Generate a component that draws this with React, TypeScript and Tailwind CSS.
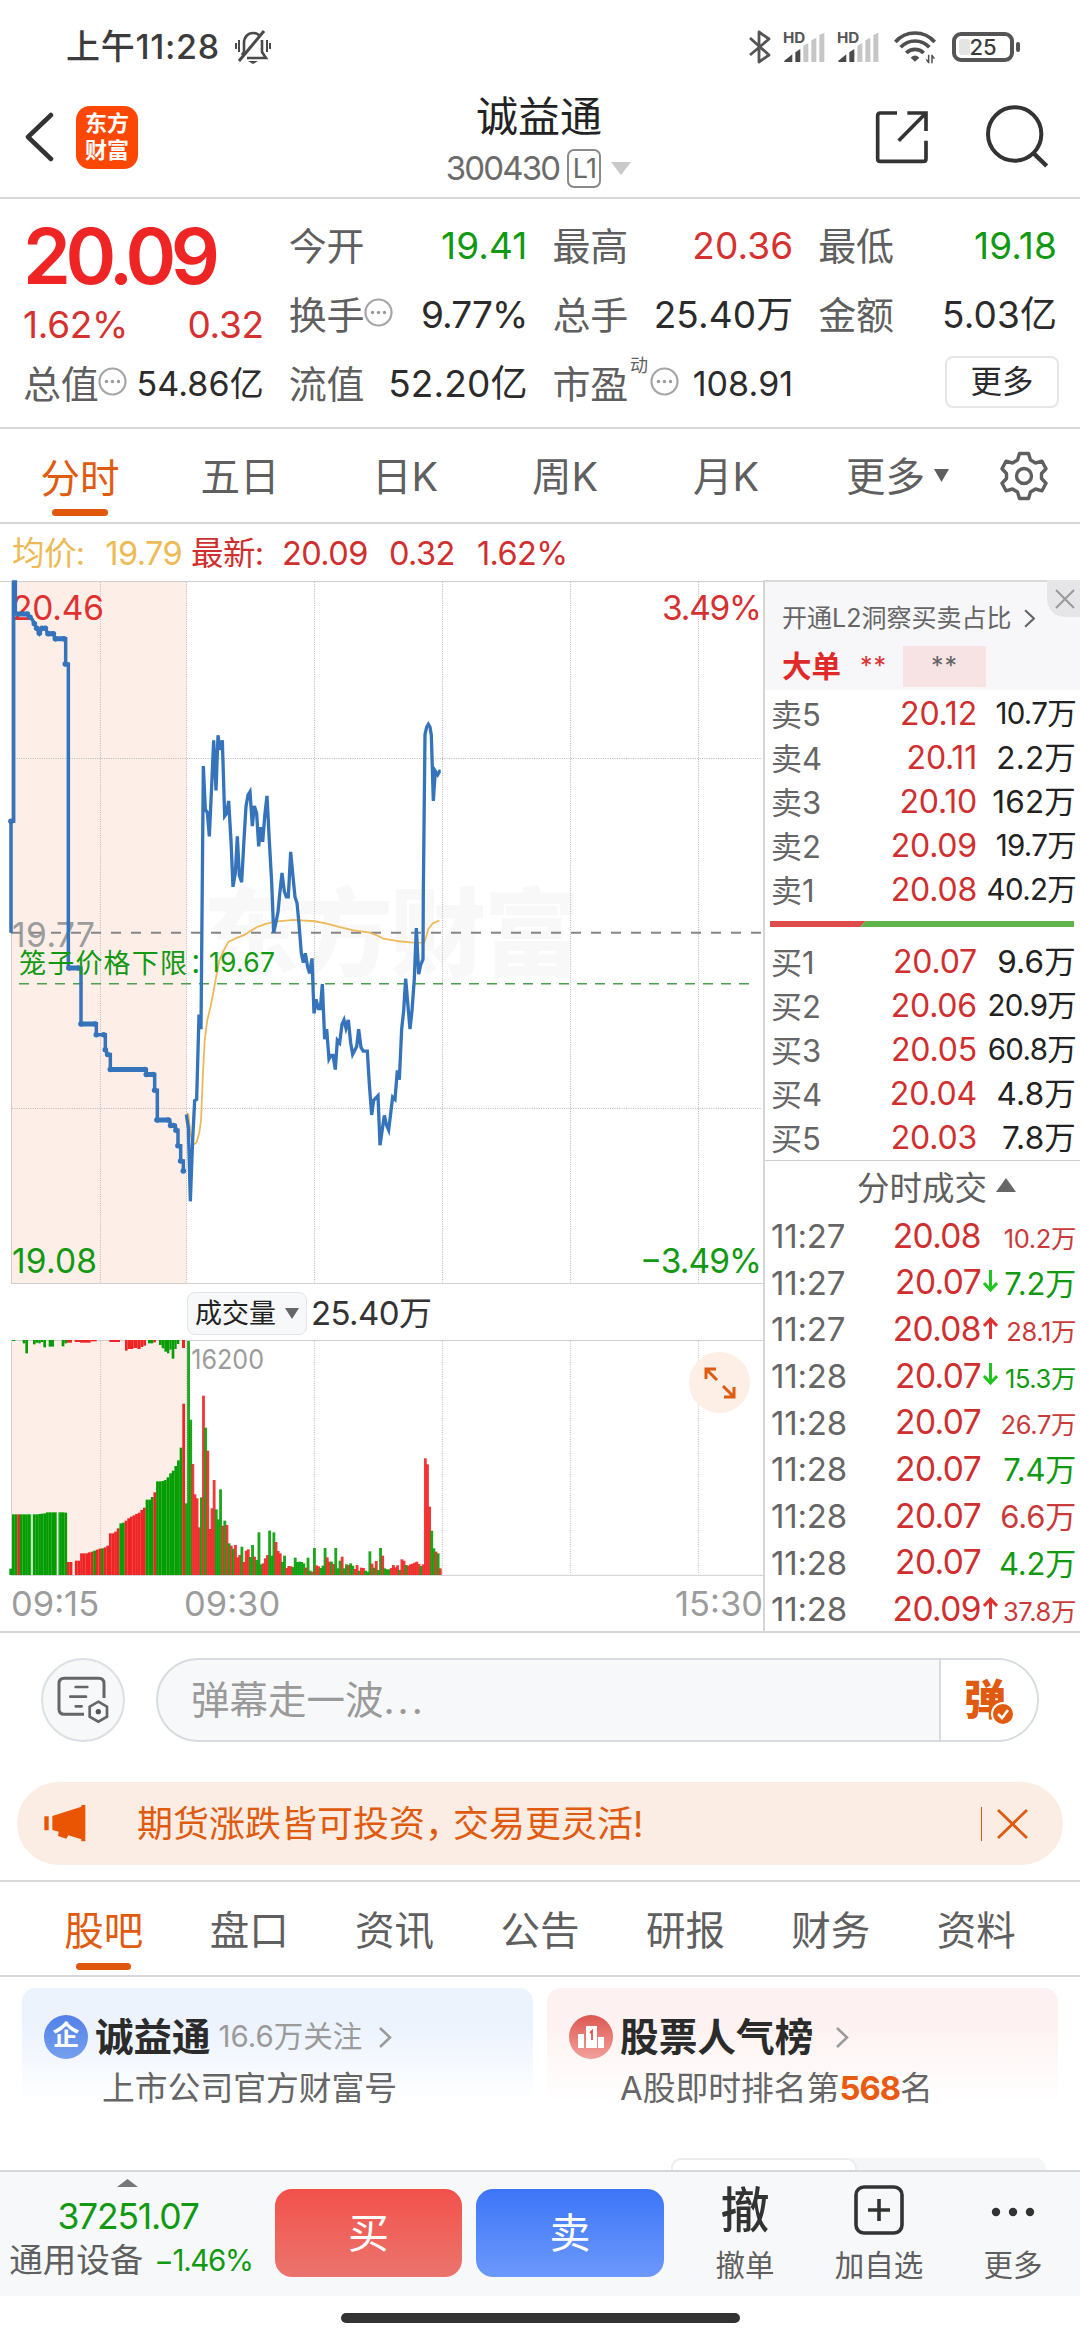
import type { ReactNode } from 'react';
import clsx from 'clsx';

const PRICE_AUCTION =
  '33,790 33,547 41,547 41,26 46,26 46,96 82,96 90,103 97,108 104,118 110,127 118,138 126,127 136,127 144,139 160,139 166,150 197,150 197,205 205,205 205,867 243,867 243,989 289,989 289,1012 316,1012 316,1045 323,1055 331,1055 331,1088 439,1088 439,1099 464,1099 464,1133 472,1133 472,1198 509,1198 512,1210 526,1210 528,1220 534,1220 534,1254 542,1254 542,1287 550,1287 550,1309';

const AUCTION_DOTS = [
  [33, 547], [82, 96], [90, 103], [103, 117], [110, 127], [118, 138], [126, 127], [136, 127], [144, 139], [160, 139],
  [166, 150], [192, 150], [196, 205], [207, 867], [236, 867], [243, 989], [286, 989], [289, 1012], [311, 1012],
  [316, 1045], [323, 1055], [331, 1088], [435, 1088], [439, 1099], [460, 1099], [464, 1133], [471, 1198], [505, 1198],
  [512, 1210], [521, 1210], [528, 1220], [534, 1254], [542, 1287], [550, 1309],
];

const PRICE_LINE =
  '559,1186 565,1215 571,1375 578,1240 584,1156 590,1153 597,968 603,1000 610,427 616,522 622,528 628,580 635,470 641,371 648,480 654,360 660,392 667,371 674,536 680,530 686,503 693,590 699,690 706,660 712,580 718,665 725,680 731,600 738,515 744,490 750,483 757,558 763,514 770,530 776,602 782,560 788,592 795,530 801,492 808,590 815,680 821,790 827,770 834,745 840,700 846,660 853,700 859,712 865,712 872,614 878,660 885,712 891,725 897,770 904,835 910,855 916,835 923,865 929,878 936,846 942,966 948,935 955,955 961,955 967,902 974,1022 980,1000 987,1065 993,1057 999,1057 1006,1088 1012,1024 1019,1030 1026,990 1032,980 1038,998 1045,980 1052,1030 1058,1055 1070,1038 1076,1000 1083,1040 1090,1048 1102,1048 1108,1120 1115,1187 1121,1155 1134,1145 1140,1253 1153,1188 1160,1210 1166,1220 1178,1148 1185,1153 1192,1090 1198,1110 1205,1000 1211,960 1217,890 1224,950 1230,1000 1236,960 1243,890 1249,780 1256,880 1262,860 1269,848 1270,700 1275,358 1280,342 1285,336 1290,342 1294,360 1300,503 1306,438 1313,446 1319,438 1322,438';

const AVG_LINE =
  '559,1183 565,1185 572,1230 580,1252 590,1246 598,1225 603,1200 608,1110 614,1025 622,980 632,950 645,900 658,850 670,830 685,810 705,803 735,794 770,778 800,770 825,766 880,762 945,765 980,770 1020,778 1060,785 1110,790 1135,797 1150,803 1190,808 1230,811 1272,812 1278,800 1285,782 1298,770 1318,763';

// g = down, r = up; number is the y of the top of the bar
const AUCTION_VOLUME =
  'g703 g703 r703 g703 g703 g703 g703 g703 g703 g703 g702 g701 g700 g697 g697 g697 g697 g697 g697 g697 g698 r846 r846 r885 r842 r842 r820 r820 r820 r817 r815 g812 r809 r806 g805 r802 r797 r760 r760 r755 r745 g730 g728 r722 r715 r710 r706 r702 r698 r690 r683 g659 g659 g651 r637 g604 g604 g603 g600 g592 g580 g572 g558 g541 g503 r371';

const UNMATCHED = [
  [36, 10, 183, 'g'], [68, 8, 190, 'g'], [76, 8, 220, 'g'], [99, 8, 193, 'g'], [107, 8, 188, 'g'], [115, 7, 190, 'g'],
  [122, 8, 186, 'g'], [130, 8, 202, 'g'], [146, 16, 200, 'g'], [185, 8, 199, 'g'], [193, 8, 190, 'g'], [201, 15, 188, 'r'],
  [224, 16, 186, 'r'], [240, 32, 188, 'r'], [272, 18, 184, 'r'], [328, 32, 186, 'r'], [375, 8, 212, 'r'],
  [383, 17, 207, 'r'], [400, 12, 204, 'r'], [412, 10, 207, 'r'], [422, 8, 201, 'r'], [430, 8, 197, 'r'],
  [444, 16, 190, 'g'], [460, 8, 187, 'r'], [477, 8, 195, 'g'], [485, 8, 205, 'g'], [493, 8, 215, 'g'], [501, 7, 220, 'g'],
  [508, 7, 209, 'g'], [515, 8, 236, 'g'], [523, 7, 207, 'g'], [530, 8, 192, 'g'], [546, 9, 204, 'r'],
] as const;

const VOLUME =
  'g670 g183 g419 r552 r643 r655 r742 g652 r347 g443 r512 r747 r685 r600 g688 g718 g628 r737 g722 r735 g790 r797 g806 r795 r832 r825 g800 r846 r812 r808 g831 g795 r830 g840 g757 g853 r850 r835 r825 g752 g827 g757 r786 r813 r820 g846 g827 r864 r858 r859 g861 g833 g846 g845 g846 g850 r863 g833 g872 r875 g804 r856 r859 g864 g857 g804 r832 r845 g845 r852 g804 g865 g842 r830 g865 g853 r855 g850 g857 r867 r855 g872 r863 r864 g872 g875 g814 r851 g863 r843 g870 g804 r827 g865 g868 g868 r864 r855 r862 r856 g870 r838 r842 g855 r857 r853 r851 r848 r845 r852 g858 r853 r535 r553 r680 g752 g805 r815 g820 r865';

const ASKS = [
  ['卖5', '20.12', '10.7万'],
  ['卖4', '20.11', '2.2万'],
  ['卖3', '20.10', '162万'],
  ['卖2', '20.09', '19.7万'],
  ['卖1', '20.08', '40.2万'],
];

const BIDS = [
  ['买1', '20.07', '9.6万'],
  ['买2', '20.06', '20.9万'],
  ['买3', '20.05', '60.8万'],
  ['买4', '20.04', '4.8万'],
  ['买5', '20.03', '7.8万'],
];

interface Trade {
  time: string;
  price: string;
  vol: string;
  up: boolean;
  arrow?: 'up' | 'down';
}

const TRADES: Trade[] = [
  { time: '11:27', price: '20.08', vol: '10.2万', up: true },
  { time: '11:27', price: '20.07', vol: '7.2万', up: false, arrow: 'down' },
  { time: '11:27', price: '20.08', vol: '28.1万', up: true, arrow: 'up' },
  { time: '11:28', price: '20.07', vol: '15.3万', up: false, arrow: 'down' },
  { time: '11:28', price: '20.07', vol: '26.7万', up: true },
  { time: '11:28', price: '20.07', vol: '7.4万', up: false },
  { time: '11:28', price: '20.07', vol: '6.6万', up: true },
  { time: '11:28', price: '20.07', vol: '4.2万', up: false },
  { time: '11:28', price: '20.09', vol: '37.8万', up: true, arrow: 'up' },
];

const fillOf = (c: string) => (c === 'g' ? '#049d04' : '#ef2424');

function Signal() {
  return (
    <svg className="w-[42px] h-[42px] mt-[-10px]" viewBox="0 -30 126 126">
      <text x="0" y="35" fontSize="43" fontWeight="700" fill="#555" textLength="67" lengthAdjust="spacingAndGlyphs">HD</text>
      <path d="M4 93V89L28 70V93Z" fill="#4a4a4a" />
      <path d="M37 93V64L52 54V93Z" fill="#4a4a4a" />
      <path d="M61 93V44L76 36V93ZM85 93V28L100 20V93ZM109 93V12L124 5V93Z" fill="#c6c6c6" />
    </svg>
  );
}

function StatusBar() {
  return (
    <div className="h-[94px] flex items-center pl-[66px] pr-[60px] text-[#3c3c3c]">
      <span className="text-[34px] font-medium tracking-[0.700px] leading-none">上午11:28</span>
      <svg className="ml-[15px] w-[36px] h-[34px]" viewBox="0 0 36 34" fill="none" stroke="#4a4a4a" strokeWidth="2.6">
        <path d="M9 22V13C9 7 13 3 18 3c3 0 5.500 1.200 7 3.400M27 10v12l4 6H12M9 22l-2 3" />
        <path d="M29 1L4 31" strokeWidth="3" />
        <path d="M4 10v12M1 13v6M32 10v12M35 13v6" strokeWidth="2" />
        <path d="M13 31h10l-5 3z" fill="#4a4a4a" stroke="none" />
      </svg>
      <div className="ml-auto flex items-center">
        <svg className="w-[22px] h-[34px]" viewBox="0 0 22 34" fill="none" stroke="#555" strokeWidth="2.8">
          <path d="M1 8L20 25L10 32V2L20 9L1 25" strokeLinejoin="round" />
        </svg>
        <div className="ml-[12px]"><Signal /></div>
        <div className="ml-[12px]"><Signal /></div>
        <svg className="ml-[15px] w-[44px] h-[34px]" viewBox="0 0 132 102" fill="none" stroke="#4f4f4f" strokeWidth="11">
          <path d="M4 36A78 78 0 0 1 122 36" />
          <path d="M20 52A58 58 0 0 1 106 52" />
          <path d="M37 69A37 37 0 0 1 89 69" />
          <path d="M50 83Q63 70 76 83L63 95Z" fill="#4f4f4f" stroke="none" />
          <path d="M104 74v26M114 100V74M97 88l7 10M121 86l-7-10" strokeWidth="4.500" />
        </svg>
        <div className="ml-[14px] w-[62px] h-[30px] rounded-[9px] border-4 border-[#555] flex items-center justify-center relative">
          <div className="absolute left-[3px] top-[3px] w-[11px] h-[16px] rounded-[3px] bg-[#e4e4e4]" />
          <span className="relative text-[22px] leading-none font-medium text-[#3c3c3c]">25</span>
        </div>
        <div className="ml-[2px] w-[4px] h-[10px] rounded-full bg-[#555]" />
      </div>
    </div>
  );
}

function Header() {
  return (
    <div className="h-[105px] flex border-b-2 border-[#d9d9d9]">
      <div className="flex-1 flex pl-[24px] pt-[12px]">
        <svg className="mt-[6px] w-[30px] h-[50px]" viewBox="0 0 30 50" fill="none" stroke="#333" strokeWidth="4.500" strokeLinecap="round" strokeLinejoin="round">
          <path d="M27 3L4 25L27 47" />
        </svg>
        <div className="ml-[22px] w-[62px] h-[63px] rounded-[14px] bg-[#fd4705] text-white text-[22px] font-bold leading-[27px] text-center pt-[4px]">
          <div>东方</div>
          <div>财富</div>
        </div>
      </div>
      <div className="w-[240px] flex flex-col items-center">
        <div className="pl-[5px] text-[42px] leading-[46px] text-[#222]">诚益通</div>
        <div className="mt-[8px] flex items-center h-[40px] pl-[4px]">
          <span className="text-[33px] leading-none tracking-[-1.8px] text-[#6b6b6b]">300430</span>
          <span className="ml-[8px] w-[34px] h-[39px] rounded-[7px] border-2 border-[#8a8a8a] text-[27px] leading-[35px] tracking-[-1px] text-center text-[#6b6b6b]">L1</span>
          <svg className="ml-[10px] w-[20px] h-[13px]" viewBox="0 0 20 13"><path d="M0 0h20L10 13z" fill="#c9c9c9" /></svg>
        </div>
      </div>
      <div className="flex-1 flex justify-end pr-[31px] pt-[10px]">
        <svg className="mt-[6px] w-[54px] h-[54px]" viewBox="434 268 162 162" fill="none" stroke="#333" strokeWidth="11">
          <path d="M500 277H450Q442 277 442 285V414Q442 422 450 422H579Q587 422 587 414V360M531 277H587V331M584 280L505 360" />
        </svg>
        <svg className="ml-[56px] w-[64px] h-[64px]" viewBox="765 251 192 192" fill="none" stroke="#333" strokeWidth="12">
          <circle cx="854" cy="341" r="80" />
          <path d="M908 396L950 437" strokeWidth="13" />
        </svg>
      </div>
    </div>
  );
}

function InfoDot() {
  return (
    <svg className="w-[29px] h-[29px] mb-[4px] shrink-0" viewBox="0 0 29 29" fill="#9a9a9a">
      <circle cx="14.500" cy="14.500" r="13" fill="none" stroke="#a6a6a6" strokeWidth="2.200" />
      <circle cx="8.500" cy="14.500" r="1.700" />
      <circle cx="14.500" cy="14.500" r="1.700" />
      <circle cx="20.500" cy="14.500" r="1.700" />
    </svg>
  );
}

function Quote({ label, value, tone, info, small }: { label: ReactNode; value: string; tone: string; info?: boolean; small?: boolean }) {
  return (
    <div className="h-[69px] flex items-center whitespace-nowrap">
      <span className="text-[38px] leading-none tracking-[-0.300px] text-[#5f5f5f]">{label}</span>
      {info && <InfoDot />}
      <span className={clsx('ml-auto leading-none', small ? 'text-[34px]' : 'text-[37px]', value.endsWith('%') ? 'tracking-[-0.900px]' : 'tracking-[0.100px]', tone)}>{value}</span>
    </div>
  );
}

function QuotePanel() {
  return (
    <div className="h-[230px] pt-[12px] px-[23px] flex gap-[25px] border-b-2 border-[#d9d9d9]">
      <div className="w-[241px]">
        <div className="h-[90px] flex items-center text-[77px] font-semibold leading-none tracking-[-5.500px] text-[#ef2424]">20.09</div>
        <div className="h-[50px] pb-1 flex items-center justify-between text-[37px] leading-none tracking-[-0.300px] text-[#d63131]">
          <span>1.62%</span>
          <span>0.32</span>
        </div>
        <div className="mt-[-2px]">
          <Quote label="总值" value="54.86亿" tone="text-[#2b2b2b]" info small />
        </div>
      </div>
      <div className="w-[239px]">
        <Quote label="今开" value="19.41" tone="text-[#119911]" />
        <Quote label="换手" value="9.77%" tone="text-[#2b2b2b]" info />
        <Quote label="流值" value="52.20亿" tone="text-[#2b2b2b]" />
      </div>
      <div className="w-[241px]">
        <Quote label="最高" value="20.36" tone="text-[#d63131]" />
        <Quote label="总手" value="25.40万" tone="text-[#2b2b2b]" />
        <Quote label={<>市盈<sup className="ml-[2px] mr-[2px] text-[18px] top-[-1.4em]">动</sup></>} value="108.91" tone="text-[#2b2b2b]" info small />
      </div>
      <div className="w-[239px]">
        <Quote label="最低" value="19.18" tone="text-[#119911]" />
        <Quote label="金额" value="5.03亿" tone="text-[#2b2b2b]" />
        <div className="h-[66px] flex items-center justify-end">
          <div className="w-[114px] h-[52px] mr-[-2px] rounded-[8px] border-2 border-[#e6e6e6] text-[31.500px] leading-[48px] text-center text-[#2b2b2b]">更多</div>
        </div>
      </div>
    </div>
  );
}

function PeriodTabs() {
  return (
    <div className="h-[95px] flex items-center pl-[26px] pr-[32px] text-[39.500px] leading-none text-[#5f5f5f] border-b-2 border-[#d9d9d9]">
      <div className="w-[108px] h-full flex flex-col items-center justify-between pt-[31px] pb-[6px] text-[#df5b10]">
        <span>分时</span>
        <span className="w-[56px] h-[7px] rounded-full bg-[#e0560b]" />
      </div>
      <span className="w-[212px] pt-[4px] text-center">五日</span>
      <span className="w-[118px] pt-[4px] text-center">日K</span>
      <span className="w-[202px] pt-[4px] text-center">周K</span>
      <span className="w-[120px] pt-[4px] text-center">月K</span>
      <span className="ml-[60px] pt-[4px]">更多</span>
      <svg className="ml-[9px] w-[15px] h-[13px]" viewBox="0 0 15 13"><path d="M0 0h15L7.500 13z" fill="#5f5f5f" /></svg>
      <svg className="ml-auto w-[48px] h-[50px]" viewBox="0 0 48 50" fill="none" stroke="#5f5f5f" strokeWidth="3.400" strokeLinejoin="round">
        <path d="M19.500 2.500h9l2 6.500 5 3 6.500-1.800 4 7.600-4.500 4.700v5l4.500 4.700-4 7.600-6.500-1.800-5 3-2 6.500h-9l-2-6.500-5-3-6.500 1.800-4-7.600 4.500-4.700v-5L2 17.800l4-7.600L12.500 12l5-3z" />
        <circle cx="24" cy="25" r="7.500" />
      </svg>
    </div>
  );
}

function PriceChart() {
  return (
    <svg className="block w-[763px] h-[711px]" viewBox="0 578 763 711">
      <rect x="11.500" y="581" width="175" height="703" fill="#fdeee8" />
      <text x="203" y="968" fontSize="96" fontWeight="900" fill="#f8f8f8" textLength="377">东方财富</text>
      <g stroke="#b8b8b8" strokeWidth="1" strokeDasharray="1 1.300">
        <path d="M100.500 582V1283M186.500 582V1283M314.500 582V1283M442.500 582V1283M570.500 582V1283M698.500 582V1283" />
        <path d="M12 758.500H762M12 1108.500H762" />
      </g>
      <path d="M0 581.500H763M11.500 581V1284M11 1283.500H763" stroke="#cfcfcf" fill="none" />
      <g fontSize="33.500">
        <text x="12" y="619.500" fill="#e03131" textLength="92">20.46</text>
        <text x="12" y="946.500" fill="#9c9c9c" textLength="83">19.77</text>
        <text x="12" y="1272.500" fill="#119911" textLength="85">19.08</text>
        <text x="662" y="619.500" fill="#d63131" textLength="100">3.49%</text>
        <text x="640" y="1272.500" fill="#119911" textLength="122">−3.49%</text>
      </g>
      <path d="M11 932.700H762" stroke="#858585" strokeWidth="2" strokeDasharray="10 10" />
      <path d="M19 983.700H750" stroke="#4ba04b" strokeWidth="1.600" strokeDasharray="10 8" />
      <g transform="translate(0 570) scale(0.33333 0.45914)" fill="none">
        <polyline points={AVG_LINE} stroke="#efb95a" strokeWidth="1.800" strokeLinejoin="round" vectorEffect="non-scaling-stroke" />
        <polyline points={PRICE_AUCTION} stroke="#3573bb" strokeWidth="3.500" vectorEffect="non-scaling-stroke" />
        {AUCTION_DOTS.map(([x, y], i) => (
          <ellipse key={i} cx={x} cy={y} rx="8.500" ry="6" fill="#3573bb" />
        ))}
        <path
          d="M50 96H82M144 139H160M166 150H192M207 867H236M243 989H286M331 1088H435M439 1099H460M471 1198H505"
          stroke="#3573bb"
          strokeWidth="5"
          vectorEffect="non-scaling-stroke"
        />
        <polyline points={PRICE_LINE} stroke="#3573bb" strokeWidth="3.300" vectorEffect="non-scaling-stroke" />
      </g>
      <text x="19" y="972.500" fontSize="27" fill="#119911" textLength="168">笼子价格下限</text>
      <text x="189" y="972.500" fontSize="27" fill="#119911">：</text>
      <text x="209" y="971.500" fontSize="26.500" fill="#119911" textLength="66">19.67</text>
    </svg>
  );
}

function VolumeChart() {
  return (
    <svg className="block w-[763px] h-[237px]" viewBox="0 180 2289 711">
      <rect x="34" y="180" width="526" height="706" fill="#fdeee8" />
      <g stroke="#b8b8b8" strokeWidth="3" strokeDasharray="3 4">
        <path d="M302 183V884M560 183V884M943 183V884M1327 183V884M1711 183V884M2095 183V884" />
      </g>
      <path d="M34 181.500H2289M34.500 181V886M34 886H2289" stroke="#cfcfcf" strokeWidth="3" fill="none" />
      {UNMATCHED.map(([x, w, bottom, c]) => (
        <rect key={x} x={x} y="180" width={w} height={bottom - 180} fill={fillOf(c)} />
      ))}
      <rect x="28" y="866" width="8" height="19" fill="#049d04" />
      {AUCTION_VOLUME.split(' ').map((bar, i) => (
        <rect key={i} x={36 + i * 7.86} y={Number(bar.slice(1))} width="8.200" height={885 - Number(bar.slice(1))} fill={fillOf(bar[0])} />
      ))}
      <path d="M96 702V885M173 696V885" stroke="#e4f5dc" strokeWidth="5" />
      {VOLUME.split(' ').map((bar, i) => (
        <rect key={i} x={555 + i * 6.4} y={Number(bar.slice(1))} width="8.500" height={885 - Number(bar.slice(1))} fill={fillOf(bar[0])} fillOpacity="0.9" />
      ))}
      <text x="574" y="268" fontSize="79" fill="#9c9c9c" textLength="218" lengthAdjust="spacingAndGlyphs">16200</text>
    </svg>
  );
}

function ChartColumn() {
  return (
    <div className="w-[763px]">
      <PriceChart />
      <div className="h-[51px] flex items-center pl-[187px] pb-[2px]">
        <div className="w-[120px] h-[43px] rounded-[8px] border border-[#e2e4e8] bg-[#f7f8fa] flex items-center justify-center gap-[9px] text-[27px] leading-none text-[#222]">
          成交量
          <svg className="w-[14px] h-[11px]" viewBox="0 0 14 11"><path d="M0 0h14L7 11z" fill="#666" /></svg>
        </div>
        <span className="ml-[4px] text-[33px] leading-none tracking-[-0.600px] text-[#333]">25.40万</span>
      </div>
      <div className="relative">
        <VolumeChart />
        <div className="absolute left-[689px] top-[12px] w-[61px] h-[61px] rounded-full bg-[#fdeee6] flex items-center justify-center">
          <svg className="w-[32px] h-[32px]" viewBox="0 0 32 32" fill="none" stroke="#df5b10" strokeWidth="3">
            <path d="M2 12V2H12M2 2L13 13M30 20V30H20M30 30L19 19" />
          </svg>
        </div>
      </div>
      <div className="h-[54px] flex items-center pl-[11px] pt-[1px] text-[34.500px] leading-none text-[#9c9c9c]">
        <span className="w-[173px]">09:15</span>
        <span>09:30</span>
        <span className="ml-auto">15:30</span>
      </div>
    </div>
  );
}

function BookRow({ row }: { row: string[] }) {
  const wide = row[2].length > 4;
  return (
    <div className="h-[44px] flex items-center leading-none">
      <span className="w-[70px] text-[31px] text-[#666]">{row[0]}</span>
      <span className="w-[136px] text-right text-[32px] tracking-[-0.200px] text-[#d02f2f]">{row[1]}</span>
      <span className={clsx('flex-1 text-right text-[#222] whitespace-nowrap', wide ? 'text-[29.500px] tracking-[-0.700px]' : 'text-[31.500px] tracking-[0.200px]')}>{row[2]}</span>
    </div>
  );
}

function Arrow({ dir }: { dir: 'up' | 'down' }) {
  return (
    <svg className="w-[15px] h-[22px]" viewBox="0 0 15 22" fill="none" stroke={dir === 'up' ? '#e03131' : '#1fc41f'} strokeWidth="3">
      <path d={dir === 'up' ? 'M7.500 22V3M1 9l6.500-7L14 9' : 'M7.500 0v19M1 13l6.500 7L14 13'} />
    </svg>
  );
}

function OrderBook() {
  return (
    <div className="relative flex-1 mt-[2px] border-l-2 border-[#d5d5d5] flex flex-col">
      <div className="h-[112px] bg-[#f7f7fa] border-t-2 border-[#d9d9d9]">
        <div className="pt-[22px] pl-[17px] flex items-center gap-[13px]">
          <span className="text-[25px] leading-[28px] whitespace-nowrap text-[#666]">开通L2洞察买卖占比</span>
          <svg className="w-[11px] h-[19px]" viewBox="0 0 10 17" fill="none" stroke="#666" strokeWidth="2"><path d="M1 1l8 7.500L1 16" /></svg>
        </div>
        <div className="mt-[14px] pl-[17px] flex items-center h-[41px]">
          <span className="text-[29.500px] font-bold leading-none text-[#e02a2a]">大单</span>
          <span className="ml-[19px] w-[43px] text-[25px] leading-none text-[#e03131] tracking-[1px]">**</span>
          <span className="w-[83px] h-[41px] bg-[#f7e3e4] text-center text-[25px] leading-[40px] text-[#666] tracking-[1px]">**</span>
        </div>
      </div>
      <div className="absolute right-0 top-0 w-[36px] h-[37px] rounded-bl-[18px] bg-[#e6e6e8] flex items-center justify-center">
        <svg className="w-[20px] h-[20px]" viewBox="0 0 20 20" fill="none" stroke="#999" strokeWidth="2"><path d="M1 1l18 18M19 1L1 19" /></svg>
      </div>
      <div className="pl-[6px] pr-[7px] pt-[2px]">
        {ASKS.map((row) => <BookRow key={row[0]} row={row} />)}
        <svg className="block ml-[-1px] mt-[9px] mb-[13px] w-[304px] h-[6px]" viewBox="0 0 304 6">
          <path d="M0 0H96L90 6H0Z" fill="#dd4b4b" />
          <path d="M96 0H304V6H90Z" fill="#5fb44a" />
        </svg>
        {BIDS.map((row) => <BookRow key={row[0]} row={row} />)}
      </div>
      <div className="mt-auto border-t border-[#d0d0d0] h-[471px]">
        <div className="h-[52px] pt-[4px] flex items-center justify-center gap-[9px] pl-[25px] text-[32.500px] leading-none text-[#5f5f5f]">
          分时成交
          <svg className="w-[20px] h-[14px] mb-2" viewBox="0 0 20 14"><path d="M0 14h20L10 0z" fill="#666" /></svg>
        </div>
        {TRADES.map((t, i) => (
          <div key={i} className="h-[46.700px] pl-[6px] pr-[7px] flex items-center leading-none whitespace-nowrap">
            <span className="w-[88px] text-[33px] tracking-[-0.200px] text-[#666]">{t.time}</span>
            <span className="w-[122px] text-right text-[33.500px] tracking-[-0.600px] text-[#d02f2f]">{t.price}</span>
            <span className="w-[18px] pl-[2px] pb-1">{t.arrow && <Arrow dir={t.arrow} />}</span>
            <span
              className={clsx(
                'flex-1 text-right',
                t.vol.length > 4 ? 'text-[25.500px] tracking-[-0.400px] pt-[4px]' : 'text-[31px] tracking-[-0.200px]',
                t.up ? 'text-[#c93a3a]' : 'text-[#119911]',
              )}
            >
              {t.vol}
            </span>
          </div>
        ))}
      </div>
    </div>
  );
}

function DanmuBar() {
  return (
    <div className="pt-[25px] pl-[41px] pr-[41px] flex justify-between">
      <div className="w-[84px] h-[84px] rounded-full border-2 border-[#dcdfe4] bg-[#f6f8fa] flex items-center justify-center">
        <svg className="w-[52px] h-[48px]" viewBox="84 113 156 144" fill="none" stroke="#666" strokeWidth="9">
          <path d="M165 228H106Q90 228 90 212V136Q90 120 106 120H209Q225 120 225 136V179" />
          <path d="M140 146H175M124 175H171M140 204H158" strokeLinecap="round" strokeWidth="8" />
          <path d="M208 190L234 205V235L208 250L182 235V205Z" strokeWidth="8" />
          <circle cx="208" cy="220" r="8" fill="#555" stroke="none" />
        </svg>
      </div>
      <div className="w-[883px] h-[84px] rounded-full border-2 border-[#d8dbdf] bg-[#f6f8fa] flex overflow-hidden">
        <span className="flex-1 pl-[33px] text-[38.500px] leading-[80px] text-[#9a9a9a]">弹幕走一波<span className="tracking-[3px]">...</span></span>
        <div className="w-[98px] border-l-2 border-[#d8dbdf] bg-white flex items-center pl-[23px]">
          <div className="relative text-[42px] leading-[44px] font-black text-[#df5b10]">
            弹
            <svg className="absolute left-[27px] top-[24px] w-[24px] h-[24px]" viewBox="0 0 24 24">
              <circle cx="12" cy="12" r="11" fill="#df5b10" stroke="#fff" strokeWidth="2" />
              <path d="M7 12l4 4 6-8" fill="none" stroke="#fff" strokeWidth="2.500" />
            </svg>
          </div>
        </div>
      </div>
    </div>
  );
}

function Banner() {
  return (
    <div className="mt-[40px] mx-[17px] h-[83px] rounded-full bg-[#fcede4] flex items-center pl-[27px] text-[#df5b10]">
      <svg className="w-[42px] h-[37px]" viewBox="44 497 126 111" fill="#ea5504">
        <path d="M45 531h13v42H45zM69 530L156 502V497H168V606H156V600L117 588L111 598L86 590L88 577L69 572Z" />
      </svg>
      <span className="ml-[51px] text-[36px] leading-none">期货涨跌皆可投资<span className="inline-block w-[28px]">，</span>交易更灵活!</span>
      <div className="ml-auto w-[1px] h-[34px] bg-[#df5b10]" />
      <svg className="ml-[15px] mr-[35px] w-[31px] h-[30px]" viewBox="0 0 31 30" fill="none" stroke="#df5b10" strokeWidth="2.800"><path d="M1 1l29 28M30 1L1 29" /></svg>
    </div>
  );
}

function SectionTabs() {
  return (
    <div className="mt-[15px] h-[97px] border-y-2 border-[#d9d9d9] flex px-[31px] text-[39.500px] leading-none text-[#5f5f5f]">
      {['股吧', '盘口', '资讯', '公告', '研报', '财务', '资料'].map((tab, i) => (
        <div key={tab} className={clsx('flex-1 flex flex-col items-center pt-[30px]', i === 0 && 'text-[#df5b10]')}>
          {tab}
          {i === 0 && <span className="mt-[11px] w-[55px] h-[7px] rounded-full bg-[#e0560b]" />}
        </div>
      ))}
    </div>
  );
}

function Cards() {
  return (
    <div className="mt-[11px] px-[22px] flex gap-[14px] whitespace-nowrap">
      <div className="flex-1 h-[127px] rounded-t-[14px] bg-gradient-to-b from-[#ecf3fd] from-30% to-white to-90% pl-[22px] pt-[24px]">
        <div className="flex items-center h-[50px]">
          <div className="w-[44px] h-[44px] rounded-full bg-gradient-to-b from-[#5280e8] to-[#76a0ee] text-white text-[27px] font-bold leading-[42px] text-center">企</div>
          <span className="ml-[7px] text-[38.500px] leading-none font-bold text-[#2b2b2b]">诚益通</span>
          <span className="ml-[8px] text-[29.500px] leading-none text-[#9a9a9a]">16.6万关注</span>
          <svg className="ml-[17px] w-[13px] h-[21px]" viewBox="0 0 13 21" fill="none" stroke="#9a9a9a" strokeWidth="2.500"><path d="M1 1l10 9.500L1 20" /></svg>
        </div>
        <div className="mt-[9px] pl-[58px] text-[32.800px] leading-[34px] text-[#666]">上市公司官方财富号</div>
      </div>
      <div className="flex-1 h-[127px] rounded-t-[14px] bg-gradient-to-b from-[#fdf2f1] from-30% to-white to-90% pl-[22px] pt-[24px]">
        <div className="flex items-center h-[50px]">
          <div className="w-[44px] h-[44px] rounded-full bg-gradient-to-b from-[#dc5650] to-[#f2a19c] flex items-center justify-center">
            <svg className="w-[26px] h-[22px]" viewBox="0 0 26 22" fill="#fff">
              <path d="M0 8h6v14H0zM8 0h11v22H8zM20 11h6v11h-6z" />
              <path d="M12 7l2-2v9" stroke="#dc5650" strokeWidth="1.800" fill="none" />
            </svg>
          </div>
          <span className="ml-[7px] text-[38.700px] leading-none font-bold text-[#2b2b2b]">股票人气榜</span>
          <svg className="ml-[23px] w-[13px] h-[21px]" viewBox="0 0 13 21" fill="none" stroke="#9a9a9a" strokeWidth="2.500"><path d="M1 1l10 9.500L1 20" /></svg>
        </div>
        <div className="mt-[9px] pl-[51px] text-[32.800px] leading-[34px] text-[#666]">
          A股即时排名第<span className="font-bold text-[#ea5a10] tracking-[-1px]">568</span>名
        </div>
      </div>
    </div>
  );
}

function BottomBar() {
  return (
    <div className="h-[126px] bg-[#f6f8fa] border-t-2 border-[#d5d8da] flex leading-none whitespace-nowrap">
      <div className="w-[254px] pl-[8px] flex flex-col items-center pt-[7px]">
        <svg className="w-[21px] h-[8px] mr-[8px]" viewBox="0 0 21 8"><path d="M0 8h21L10.500 0z" fill="#777" /></svg>
        <span className="mt-[12px] mr-[6px] text-[35.500px] tracking-[-1.200px] text-[#119911]">37251.07</span>
        <div className="mt-[9px] flex items-center gap-[11px]">
          <span className="text-[33.500px] text-[#5f5f5f]">通用设备</span>
          <span className="text-[29.500px] tracking-[-1.300px] text-[#119911]">−1.46%</span>
        </div>
      </div>
      <div className="ml-[21px] mt-[17px] w-[187px] h-[88px] rounded-[17px] bg-gradient-to-b from-[#f2504a] to-[#ea746d] text-white text-[41px] flex items-center justify-center">买</div>
      <div className="ml-[14px] mt-[17px] w-[188px] h-[88px] rounded-[17px] bg-gradient-to-b from-[#3c75f7] to-[#6c98fb] text-white text-[41px] flex items-center justify-center">卖</div>
      <div className="ml-[14px] w-[134px] flex flex-col items-center text-[29.500px] text-[#5f5f5f]">
        <span className="mt-[14px] h-[50px] text-[49px] font-medium leading-[50px] text-[#333]">撤</span>
        <span className="mt-[15px]">撤单</span>
      </div>
      <div className="w-[134px] flex flex-col items-center text-[29.500px] text-[#5f5f5f]">
        <svg className="mt-[13px] w-[50px] h-[50px]" viewBox="0 0 50 50" fill="none" stroke="#333" strokeWidth="3.600">
          <rect x="2" y="2" width="46" height="46" rx="8" />
          <path d="M25 14v22M14 25h22" />
        </svg>
        <span className="mt-[16px]">加自选</span>
      </div>
      <div className="flex-1 flex flex-col items-center text-[29.500px] text-[#5f5f5f]">
        <svg className="mt-[13px] w-[44px] h-[50px]" viewBox="0 0 44 50" fill="#333">
          <circle cx="5" cy="27" r="4.200" />
          <circle cx="22" cy="27" r="4.200" />
          <circle cx="39" cy="27" r="4.200" />
        </svg>
        <span className="mt-[16px]">更多</span>
      </div>
    </div>
  );
}

export default function App() {
  return (
    <div className="w-[1080px] h-[2340px] overflow-hidden bg-white flex flex-col font-['Inter','Noto_Sans_CJK_SC',sans-serif]">
      <StatusBar />
      <Header />
      <QuotePanel />
      <PeriodTabs />
      <div className="h-[54px] flex items-center pl-[12px] pt-[7px] text-[32.500px] leading-none tracking-[-0.600px] text-[#d02f2f] whitespace-nowrap">
        <span className="w-[179px] flex justify-between pr-[9px] text-[#edba55]"><span>均价:</span><span>19.79</span></span>
        <span className="w-[91px]">最新:</span>
        <span className="w-[107px]">20.09</span>
        <span className="w-[88px]">0.32</span>
        <span>1.62%</span>
      </div>
      <div className="h-[1055px] flex border-b-2 border-[#d5d5d5]">
        <ChartColumn />
        <OrderBook />
      </div>
      <DanmuBar />
      <Banner />
      <SectionTabs />
      <Cards />
      <div className="mt-auto ml-[671px] w-[375px] h-[12px] rounded-t-[10px] bg-[#f5f6f8]">
        <div className="w-[186px] h-[12px] rounded-t-[10px] border-2 border-b-0 border-[#ebecee] bg-white" />
      </div>
      <BottomBar />
      <div className="h-[44px] shrink-0 pt-[17px]">
        <div className="mx-auto w-[399px] h-[10px] rounded-full bg-[#333]" />
      </div>
    </div>
  );
}
